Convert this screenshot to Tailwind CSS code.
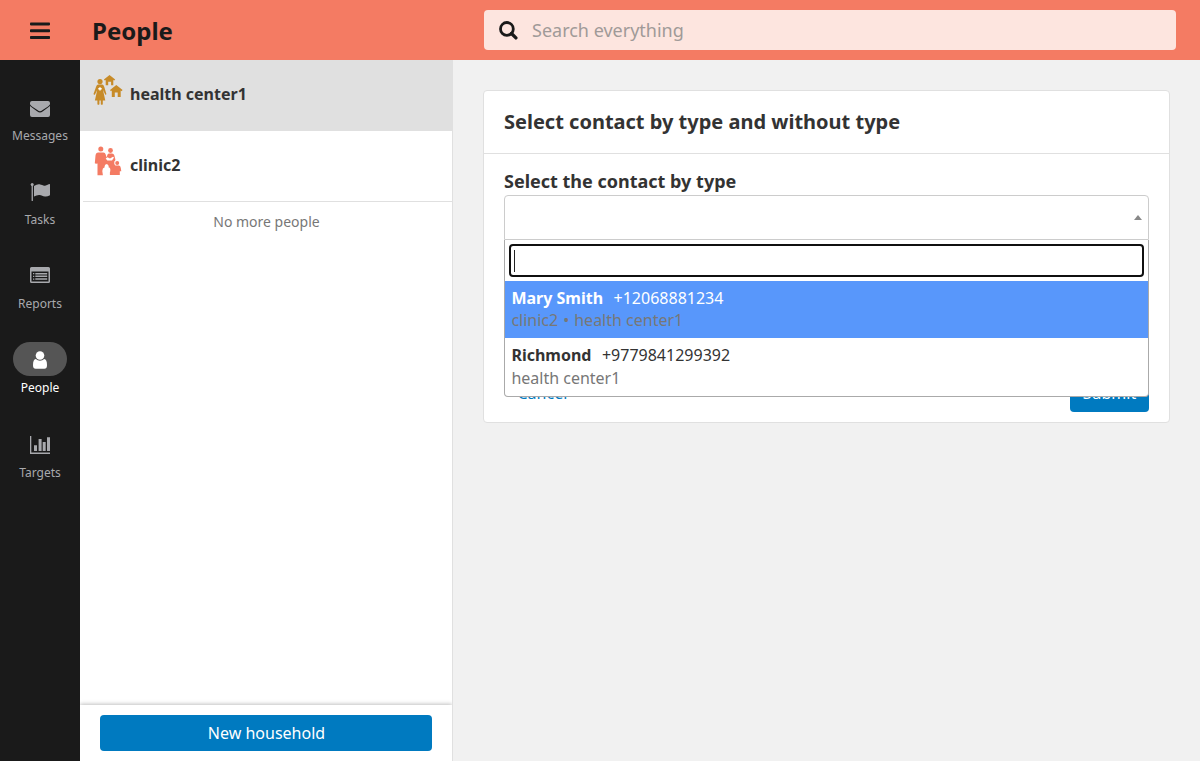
<!DOCTYPE html>
<html lang="en">
<head>
<meta charset="utf-8">
<title>People</title>
<script src="https://cdn.jsdelivr.net/npm/@tailwindcss/browser@4"></script>
</head>
<body class="h-[761px] w-[1200px] overflow-hidden bg-[#f1f1f1] font-['Noto_Sans',sans-serif] text-base text-[#333]">
<div class="flex h-full flex-col">
  <header class="flex h-[60px] shrink-0 items-center bg-[#f47b63] text-[#1a1a1a]">
    <div class="flex w-20 justify-center">
      <svg class="mt-px h-[18px] w-5" viewBox="0 0 20 18" fill="currentColor"><rect y="0.4" width="20" height="3" rx=".8"/><rect y="7.2" width="20" height="3" rx=".8"/><rect y="14.1" width="20" height="3" rx=".8"/></svg>
    </div>
    <h1 class="w-[404px] pl-3 pt-0.5 text-2xl font-bold">People</h1>
    <div class="flex h-10 w-[692px] items-center rounded bg-[#fde5df] pl-[15px]">
      <svg class="h-[19px] w-[19px]" viewBox="0 0 19 19" fill="none" stroke="currentColor" stroke-width="2.8"><circle cx="7.9" cy="7.9" r="6.4"/><path d="M12.5 12.5l4.4 4.4" stroke-width="3.3" stroke-linecap="round"/></svg>
      <span class="ml-3.5 text-lg text-[#a09a98]">Search everything</span>
    </div>
  </header>
  <div class="flex min-h-0 flex-1">
    <nav class="flex w-20 shrink-0 flex-col items-center bg-[#1a1a1a] pt-[31px] text-xs leading-4 text-[#a8a9ad]">
      <a class="flex h-[84px] flex-col items-center"><span class="flex h-[34px] w-[54px] items-center justify-center">
        <svg class="h-4 w-5 translate-y-px" viewBox="0 0 20 16" fill="currentColor"><path d="M0 2Q0 0 2 0H18Q20 0 20 2V3.200Q19.600 4.300 18 5.400L12.600 9.100Q11 10.300 10 10.300T7.400 9.100L2 5.400Q.4 4.300 0 3.200Z"/><path d="M0 4.700Q.6 5.500 1.300 6L7 10.200Q8.800 11.400 10 11.400T13 10.200L18.700 6Q19.400 5.500 20 4.700V14Q20 16 18 16H2Q0 16 0 14Z"/></svg></span><span class="mt-[3px]">Messages</span></a>
      <a class="flex h-[84px] flex-col items-center"><span class="flex h-[34px] w-[54px] items-center justify-center">
        <svg class="h-[18px] w-5" viewBox="0 0 20 18" fill="currentColor"><circle cx="2.200" cy="1.600" r="1.500"/><rect x="1.600" y="2" width="1.300" height="16" rx=".5"/><path d="M4 3Q7 1 9.500 1.300C12 1.700 13 3 15 2.700C17 2.400 18.500 1.300 19.500 1Q20 1 20 1.600V11.700Q20 12.200 19.500 12.400C18 13.200 16.500 13.800 15 13.500C12.500 13 11.500 11.700 9 11.900Q6.500 12.100 4 13.500Z"/></svg></span><span class="mt-[3px]">Tasks</span></a>
      <a class="flex h-[84px] flex-col items-center"><span class="flex h-[34px] w-[54px] items-center justify-center">
        <svg class="h-4 w-5 -translate-y-px" viewBox="0 0 20 16" fill="currentColor"><path fill-rule="evenodd" d="M1.500 0H18.500Q20 0 20 1.500V14.500Q20 16 18.500 16H1.500Q0 16 0 14.500V1.500Q0 0 1.500 0ZM1.500 4.500V14.500H18.500V4.500Z"/><path d="M3 6h1.300v1.300H3zM3 8.700h1.300V10H3zM3 11.400h1.300v1.300H3zM5.300 5.900H17.200v1.500H5.300zM5.300 8.600H17.200V10.100H5.300zM5.300 11.300H17.200v1.500H5.300z"/></svg></span><span class="mt-[3px]">Reports</span></a>
      <a class="flex h-[85px] flex-col items-center text-white"><span class="-mt-px flex h-[34px] w-[54px] items-center justify-center rounded-full bg-[#555]">
        <svg class="h-[18px] w-[14px] translate-y-px" viewBox="0 0 14 18" fill="currentColor"><circle cx="7" cy="4.500" r="4.300"/><path d="M2.800 8Q4.600 9.700 7 9.700T11.200 8Q14 8.300 14 14.200Q14 17.800 11.300 17.800H2.700Q0 17.800 0 14.200Q0 8.300 2.800 8Z"/></svg></span><span class="mt-1">People</span></a>
      <a class="flex h-[84px] flex-col items-center"><span class="flex h-[34px] w-[54px] items-center justify-center">
        <svg class="h-[18px] w-5" viewBox="0 0 20 18" fill="currentColor"><path d="M0 0H1.300V16.600H20V18H0ZM4 9.300H7V15H4ZM8.600 3H11.600V15H8.600ZM12.700 6H15.700V15H12.700ZM17 1.300H20V15H17Z"/></svg></span><span class="mt-[3px]">Targets</span></a>
    </nav>
    <section class="flex w-[373px] shrink-0 flex-col overflow-hidden border-r border-[#e0e0e0] bg-white">
      <div class="flex h-[71px] shrink-0 items-center bg-[#e0e0e0] pl-[12.5px] font-bold">
        <svg class="mb-[11px] h-[30px] w-[30px]" viewBox="0 0 30 30" fill="#c78b28"><circle cx="7" cy="6.600" r="2.600"/><path d="M5 9.400H9.300Q10.700 9.600 11.300 12L13.400 19Q13.200 20 12.300 19.700L10 15L12.300 25.500H9.800V29.200Q8.800 30.500 7.800 29.200V25.500H6.400V29.200Q5.400 30.500 4.400 29.200V25.500H1.900L4.200 15L1.900 19.700Q.7 20 .5 19L3 12Q3.600 9.600 5 9.400Z"/><path d="M16.500 0L22.200 4.400L21.200 5.500L20.300 5V10.200H18.100V6.800H15.200V10.200H12.700V5L11.800 5.500L10.900 4.400ZM23.300 9.900L29.600 15L28.500 16.200L27.700 15.600V22H24.700V17.600H21.800V22H18.800V15.600L17.900 16.200L17 15Z"/><path fill="#fff" d="M6.300 12.200H7.700V13H8.700V14.400H7.700V15.400H6.300V14.400H5.300V13H6.300Z"/></svg>
        <span class="-mr-2 ml-[7.5px] mb-[3px]">health center1</span>
      </div>
      <div class="ml-[3px] flex h-[71px] shrink-0 items-center border-b border-[#e0e0e0] pl-[9px] font-bold">
        <svg class="mb-[10px] h-[30px] w-[30px]" viewBox="0 0 30 30" fill="#f47b63"><circle cx="8.800" cy="3" r="2.500"/><circle cx="18.500" cy="4.500" r="2.400"/><circle cx="25.200" cy="17" r="2"/><path d="M6.200 6.500H11.400Q13.200 6.500 13.700 8.500L14.600 11.500L15.400 8.700Q15.900 7.500 17.300 7.500H20Q21.700 7.500 22.200 9L23.400 13.500Q23.500 14.500 22.300 15.500V18L23.300 19.600H27Q28.500 20 28.800 22L29.300 25.200H27.800V29H17.900V24.500L18.300 26V23Q17.900 21.500 16.500 21.200A2 2 0 1 0 12.700 21.200Q10.300 22 10.300 25L10.900 29.300H5.500V17.500L4 17.800L2.800 17.300L3.500 9.500Q3.900 6.500 6.200 6.500Z"/><path fill="#fff" d="M13.700 12.500L15.400 11.200L18 12.500L21 10.700L22 11.600L20 14.500H15.300ZM12.600 22.300H16.700Q18 23 18.100 26L17.100 26.200V29.500H15.200V27H14V29.500H12.200V26.200L11.200 26Q11 23 12.600 22.300Z"/><circle cx="14.600" cy="20" r="1.800" fill="#fff"/></svg>
        <span class="ml-2 mb-[3px]">clinic2</span>
      </div>
      <p class="mt-[8px] pl-px text-center text-sm leading-6 text-[#777]">No more people</p>
      <div class="mt-auto h-[56px] bg-white px-5 pt-[10px] shadow-[0_-1px_4px_rgba(0,0,0,.25)]">
        <button class="block h-9 w-full rounded bg-[#007ac0] pl-px text-white">New household</button>
      </div>
    </section>
    <main class="flex-1 pl-[30px] pt-[30px]">
      <div class="h-[333px] w-[687px] rounded border border-[#e0e0e0] bg-white">
        <h2 class="h-[63px] border-b border-[#e0e0e0] pl-5 text-xl font-bold leading-[61px]">Select contact by type and without type</h2>
        <div class="relative h-[268px] px-5 pt-[14px]">
          <h3 class="text-lg font-bold leading-[27px]">Select the contact by type</h3>
          <div class="flex h-[45px] items-center justify-end rounded-t border border-[#ccc] pr-1.5">
            <svg class="h-[5px] w-2" viewBox="0 0 8 5" fill="#888"><path d="M4 0L8 5H0Z"/></svg>
          </div>
          <div class="absolute left-5 right-5 top-[222px] flex h-9 items-center justify-between">
            <span class="-mt-[3px] pl-[13.5px] text-[#007ac0]">Cancel</span>
            <span class="flex h-9 w-[79px] items-center justify-center rounded bg-[#007ac0] pb-[2px] text-white">Submit</span>
          </div>
          <div class="absolute left-5 right-5 top-[86px] h-[157px] overflow-hidden rounded-b border border-t-0 border-[#aaa] bg-white leading-[22px]">
            <div class="mx-1 mb-1 mt-[4px] flex h-[33px] items-center rounded border-2 border-[#101010] pl-[3px]"><span class="h-[22px] w-px bg-[#222]"></span></div>
            <div class="h-[57px] bg-[#5897fb] px-[6.4px] pt-[6px] text-white">
              <p><b>Mary Smith</b><span class="ml-[10.5px]">+12068881234</span></p>
              <p class="text-[#777]">clinic2<span class="mx-[5px]">•</span>health center1</p>
            </div>
            <div class="px-[6.4px] pt-[6px]">
              <p><b>Richmond</b><span class="ml-[10.5px]">+9779841299392</span></p>
              <p class="mt-px text-[#777]">health center1</p>
            </div>
          </div>
        </div>
      </div>
    </main>
  </div>
</div>
</body>
</html>
